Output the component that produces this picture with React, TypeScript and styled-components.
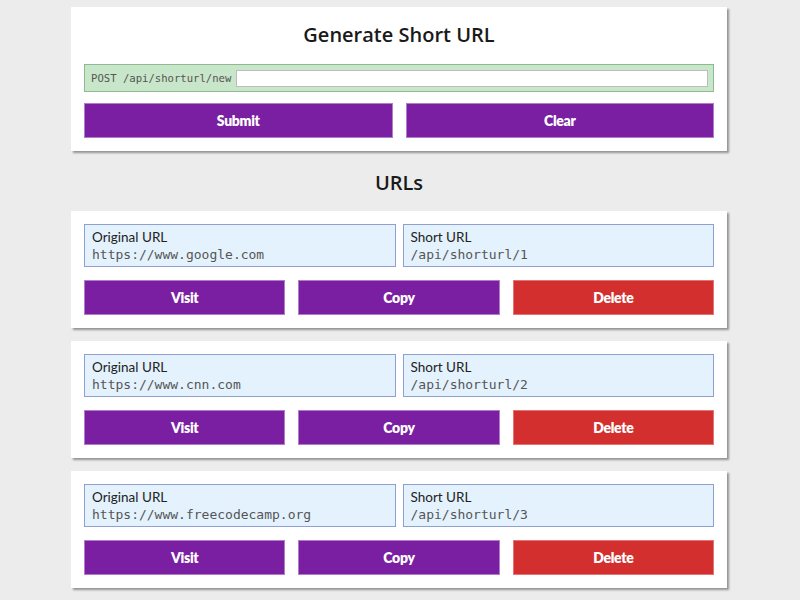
import React from "react";
import styled, { createGlobalStyle } from "styled-components";

const Global = createGlobalStyle`
  html, body { margin: 0; padding: 0; background: #ececec; }
  body { font-family: Lato, "Liberation Sans", sans-serif; }
  * { box-sizing: border-box; }
`;

const Page = styled.div`
  width: 658px;
  margin: 0 auto;
  padding: 7px 2px 0 0;
  display: flex;
  flex-direction: column;
`;

const Card = styled.section`
  background: #fff;
  box-shadow: 2px 2px 2px rgba(0, 0, 0, 0.38);
  padding: 13px;
  display: flex;
  flex-direction: column;
  margin-bottom: 13px;
`;

const Title = styled.h1`
  margin: 0 0 14px;
  font-family: "Open Sans", sans-serif;
  font-weight: 600;
  font-size: 20px;
  line-height: 30px;
  text-align: center;
  color: #1a1a1a;
`;

const Heading = styled.h2`
  margin: 4px 0 13px;
  font-family: "Open Sans", sans-serif;
  font-weight: 600;
  font-size: 20px;
  line-height: 30px;
  text-align: center;
  color: #1a1a1a;
`;

const ApiBar = styled.form`
  display: flex;
  align-items: center;
  gap: 5px;
  height: 28px;
  padding: 0 5px 0 6px;
  background: #c8e6c9;
  border: 1px solid #8fb990;
  margin-bottom: 11px;
`;

const Mono = styled.span<{ $size: number }>`
  font-family: "DejaVu Sans Mono", monospace;
  font-size: ${(p) => p.$size}px;
  line-height: 18px;
  color: #555;
  white-space: nowrap;
`;

const UrlInput = styled.input`
  flex: 1;
  height: 17px;
  border: 1px solid #bdbdbd;
  background: #fff;
  padding: 0 4px;
  outline: none;
`;

const ButtonRow = styled.div<{ $cols: number }>`
  display: grid;
  grid-template-columns: repeat(${(p) => p.$cols}, 1fr);
  column-gap: 13px;
`;

const Button = styled.button<{ $danger?: boolean }>`
  height: 35px;
  border: 1px solid ${(p) => (p.$danger ? "#e57373" : "#b27cc8")};
  background: ${(p) => (p.$danger ? "#d32f2f" : "#7b1fa2")};
  color: #fff;
  font-family: Lato, sans-serif;
  font-weight: 800;
  font-size: 14px;
  letter-spacing: -0.3px;
  cursor: pointer;
`;

const Fields = styled.div`
  display: grid;
  grid-template-columns: 1fr 1fr;
  column-gap: 7px;
  margin-bottom: 13px;
`;

const Field = styled.div`
  height: 43px;
  background: #e3f2fd;
  border: 1px solid #8e9fd0;
  padding: 3px 7px 0;
  display: flex;
  flex-direction: column;
`;

const Label = styled.span`
  font-family: Lato, sans-serif;
  font-size: 13.5px;
  line-height: 18px;
  color: #222;
`;

const urls = [
  { id: 1, original: "https://www.google.com" },
  { id: 2, original: "https://www.cnn.com" },
  { id: 3, original: "https://www.freecodecamp.org" },
];

export default function App() {
  return (
    <>
      <Global />
      <Page>
        <Card>
          <Title>Generate Short URL</Title>
          <ApiBar onSubmit={(e) => e.preventDefault()}>
            <Mono $size={10.6}>POST /api/shorturl/new</Mono>
            <UrlInput type="text" />
          </ApiBar>
          <ButtonRow $cols={2}>
            <Button>Submit</Button>
            <Button>Clear</Button>
          </ButtonRow>
        </Card>
        <Heading>URLs</Heading>
        {urls.map((u) => (
          <Card key={u.id}>
            <Fields>
              <Field>
                <Label>Original URL</Label>
                <Mono $size={13}>{u.original}</Mono>
              </Field>
              <Field>
                <Label>Short URL</Label>
                <Mono $size={13}>/api/shorturl/{u.id}</Mono>
              </Field>
            </Fields>
            <ButtonRow $cols={3}>
              <Button>Visit</Button>
              <Button>Copy</Button>
              <Button $danger>Delete</Button>
            </ButtonRow>
          </Card>
        ))}
      </Page>
    </>
  );
}
